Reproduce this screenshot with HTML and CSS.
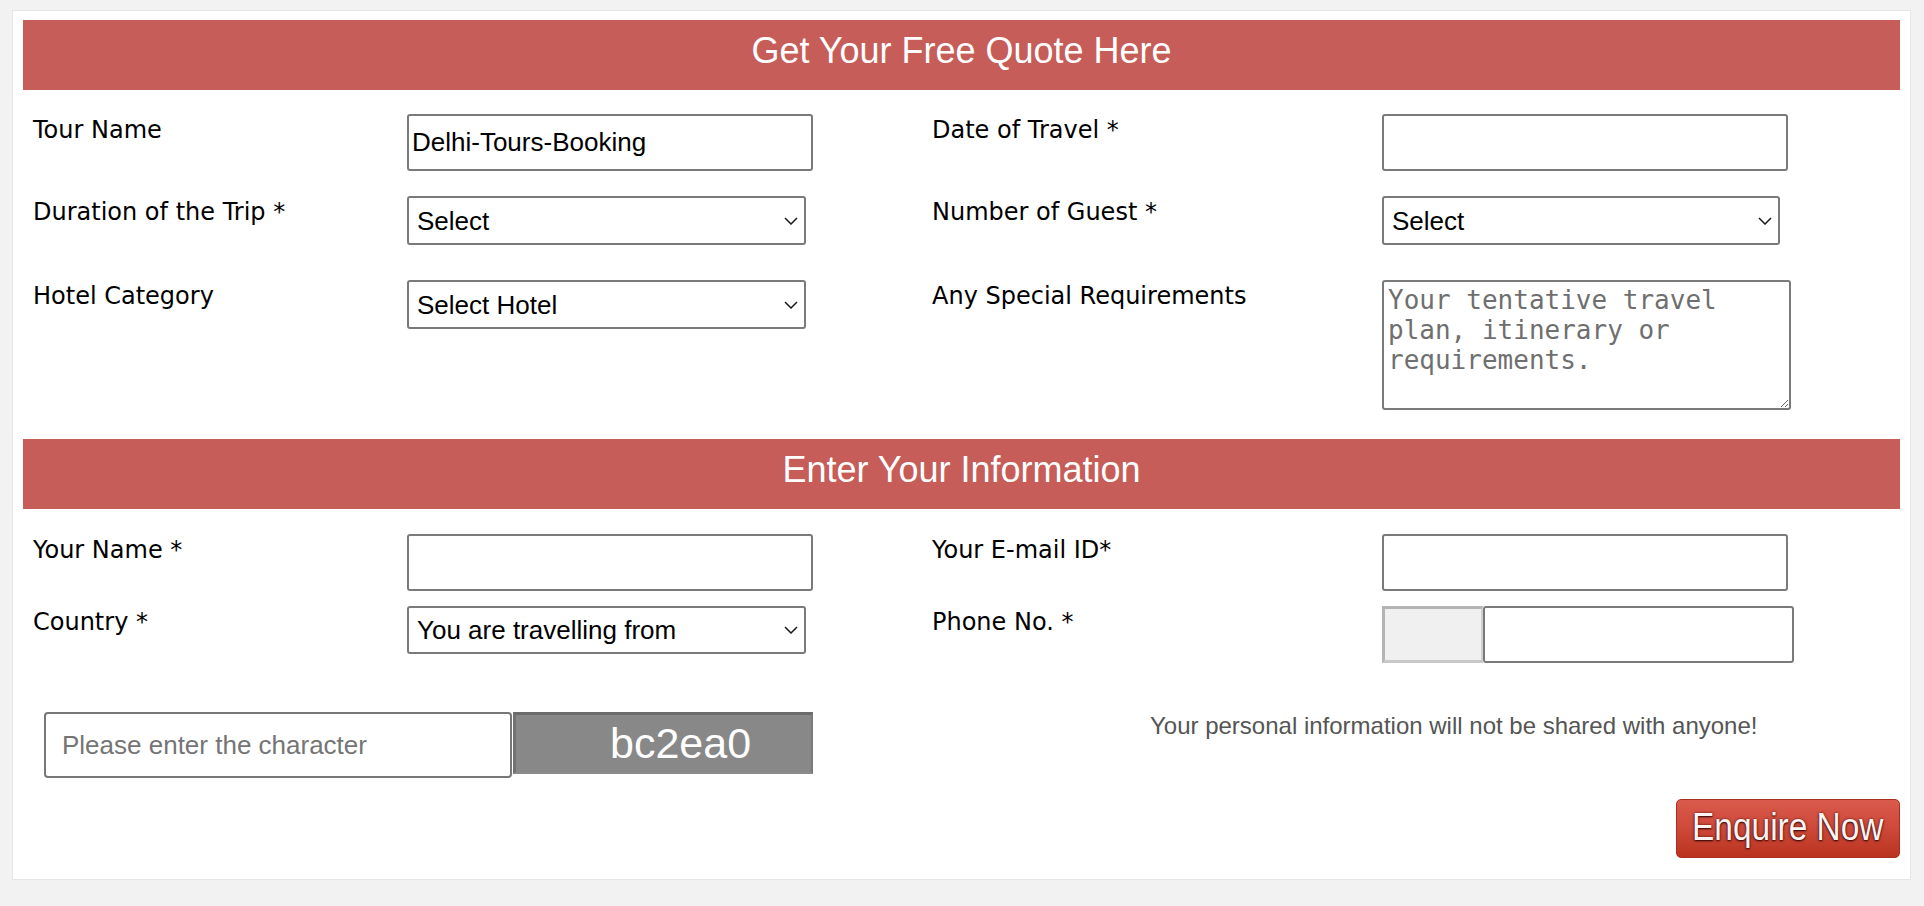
FILE: index.html
```html
<!DOCTYPE html>
<html lang="en">
<head>
<meta charset="utf-8">
<title>Get Your Free Quote Here</title>
<link rel="stylesheet" href="styles.css">
</head>
<body>
<form class="panel">
  <div class="bar">Get Your Free Quote Here</div>

  <div class="grid sec-trip">
    <label class="lbl">Tour Name</label>
    <div class="ctl"><input class="txt" type="text" value="Delhi-Tours-Booking"></div>
    <label class="lbl">Date of Travel *</label>
    <div class="ctl"><input class="txt" type="text"></div>

    <label class="lbl">Duration of the Trip *</label>
    <div class="ctl">
      <div class="sel">
        <select><option>Select</option></select>
        <svg class="chev" viewBox="0 0 14 8" width="14" height="8"><path d="M1 1 L7 7 L13 1" fill="none" stroke="#1a1a1a" stroke-width="1.5"/></svg>
      </div>
    </div>
    <label class="lbl">Number of Guest *</label>
    <div class="ctl">
      <div class="sel sel-r">
        <select><option>Select</option></select>
        <svg class="chev" viewBox="0 0 14 8" width="14" height="8"><path d="M1 1 L7 7 L13 1" fill="none" stroke="#1a1a1a" stroke-width="1.5"/></svg>
      </div>
    </div>

    <label class="lbl">Hotel Category</label>
    <div class="ctl">
      <div class="sel">
        <select><option>Select Hotel</option></select>
        <svg class="chev" viewBox="0 0 14 8" width="14" height="8"><path d="M1 1 L7 7 L13 1" fill="none" stroke="#1a1a1a" stroke-width="1.5"/></svg>
      </div>
    </div>
    <label class="lbl">Any Special Requirements</label>
    <div class="ctl"><textarea class="area" placeholder="Your tentative travel plan, itinerary or requirements."></textarea></div>
  </div>

  <div class="bar bar-info">Enter Your Information</div>

  <div class="grid sec-info">
    <label class="lbl">Your Name *</label>
    <div class="ctl"><input class="txt" type="text"></div>
    <label class="lbl">Your E-mail ID*</label>
    <div class="ctl"><input class="txt" type="text"></div>

    <label class="lbl">Country *</label>
    <div class="ctl">
      <div class="sel sel-country">
        <select><option>You are travelling from</option></select>
        <svg class="chev" viewBox="0 0 14 8" width="14" height="8"><path d="M1 1 L7 7 L13 1" fill="none" stroke="#1a1a1a" stroke-width="1.5"/></svg>
      </div>
    </div>
    <label class="lbl">Phone No. *</label>
    <div class="ctl phone">
      <input class="code" type="text" readonly>
      <input class="txt num" type="text">
    </div>
  </div>

  <div class="verify">
    <input class="captcha-in" type="text" placeholder="Please enter the character">
    <div class="captcha">bc2ea0</div>
    <p class="note">Your personal information will not be shared with anyone!</p>
  </div>

  <div class="actions">
    <button type="button" class="enquire"><span class="enquire-text">Enquire Now</span></button>
  </div>
</form>
</body>
</html>
```

FILE: styles.css
```css
html, body {
  margin: 0;
  padding: 0;
}

body {
  background: #f2f2f2;
  font-family: "Liberation Sans", Arial, sans-serif;
  color: #000;
}

.panel {
  box-sizing: border-box;
  width: 1899px;
  margin: 10px 0 0 12px;
  padding: 9px 10px 21px 10px;
  background: #fff;
  border: 1px solid #e6e6e6;
}

.bar {
  height: 70px;
  box-sizing: border-box;
  padding-bottom: 8px;
  line-height: 62px;
  background: #c65d59;
  color: #fff;
  font-size: 36px;
  text-align: center;
}

.bar-info {
  margin-top: 29px;
}

.grid {
  display: grid;
  grid-template-columns: 384px 515px 460px 1fr;
  align-items: start;
}

.sec-trip {
  margin-top: 24px;
  grid-template-rows: 82px 84px auto;
}

.sec-info {
  margin-top: 25px;
  grid-template-rows: 72px auto;
}

.lbl {
  display: block;
  padding: 2px 0 0 10px;
  font-family: "DejaVu Sans", Verdana, sans-serif;
  font-size: 24px;
  line-height: 28px;
  color: #000;
}

.ctl {
  display: flex;
}

.txt {
  box-sizing: border-box;
  width: 406px;
  height: 57px;
  margin: 0;
  padding: 0 3px;
  border: 2px solid #7a7a7a;
  border-radius: 3px;
  font-family: "Liberation Sans", Arial, sans-serif;
  font-size: 26px;
  color: #000;
  background: #fff;
  outline: none;
}

.sel {
  position: relative;
  width: 399px;
  height: 49px;
}

.sel-r {
  width: 398px;
}

.sel-country {
  height: 48px;
}

.sel select {
  box-sizing: border-box;
  width: 100%;
  height: 100%;
  margin: 0;
  padding: 0 30px 0 8px;
  border: 2px solid #7a7a7a;
  border-radius: 3px;
  background: #fff;
  font-family: "Liberation Sans", Arial, sans-serif;
  font-size: 26px;
  color: #000;
  -webkit-appearance: none;
  appearance: none;
  outline: none;
}

.chev {
  position: absolute;
  right: 8px;
  top: 50%;
  margin-top: -4px;
  pointer-events: none;
}

.area {
  box-sizing: border-box;
  width: 409px;
  height: 130px;
  margin: 0;
  padding: 3px 4px;
  border: 2px solid #7a7a7a;
  border-radius: 3px;
  font-family: "DejaVu Sans Mono", "Liberation Mono", monospace;
  font-size: 26px;
  line-height: 30px;
  color: #000;
  outline: none;
}

.area::placeholder {
  color: #6f6f6f;
}

.phone .code {
  box-sizing: border-box;
  width: 101px;
  height: 57px;
  margin: 0;
  padding: 0;
  border-style: solid;
  border-width: 3px 2px 3px 3px;
  border-color: #b4b4b4 #cfcfcf #c8c8c8 #b4b4b4;
  background: #f0f0f0;
  outline: none;
}

.phone .num {
  width: 311px;
}

.verify {
  display: flex;
  align-items: flex-start;
  margin-top: 49px;
  padding-left: 21px;
}

.captcha-in {
  box-sizing: border-box;
  width: 468px;
  height: 66px;
  margin: 0;
  padding: 0 16px;
  border: 2px solid #777;
  border-radius: 4px;
  font-family: "Liberation Sans", Arial, sans-serif;
  font-size: 26px;
  outline: none;
}

.captcha-in::placeholder {
  color: #757575;
}

.captcha {
  box-sizing: border-box;
  width: 300px;
  height: 62px;
  margin-left: 1px;
  padding-left: 94px;
  border-style: solid;
  border-width: 3px 2px 2px 3px;
  border-color: #6b6b6b #7a7a7a #8c8c8c #727272;
  background: #888;
  color: #fff;
  font-size: 43px;
  line-height: 56px;
}

.note {
  margin: 0 0 0 337px;
  font-size: 24px;
  line-height: 28px;
  color: #555;
}

.actions {
  display: flex;
  justify-content: flex-end;
  margin-top: 21px;
}

.enquire {
  box-sizing: border-box;
  display: flex;
  align-items: center;
  justify-content: center;
  width: 224px;
  height: 59px;
  margin: 0;
  padding: 0 0 3px;
  border: 1px solid #a9301f;
  border-radius: 5px;
  background: linear-gradient(#da5a4d 0%, #cf4b3b 45%, #b9331f 100%);
  color: #fbf4f2;
  font-family: "Liberation Sans", Arial, sans-serif;
  font-size: 38px;
  text-shadow: 0 1px 2px rgba(40, 0, 0, 0.9), 0 0 3px rgba(60, 0, 0, 0.7);
  cursor: pointer;
}

.enquire-text {
  display: inline-block;
  white-space: nowrap;
  transform: scaleX(0.88);
}
```
